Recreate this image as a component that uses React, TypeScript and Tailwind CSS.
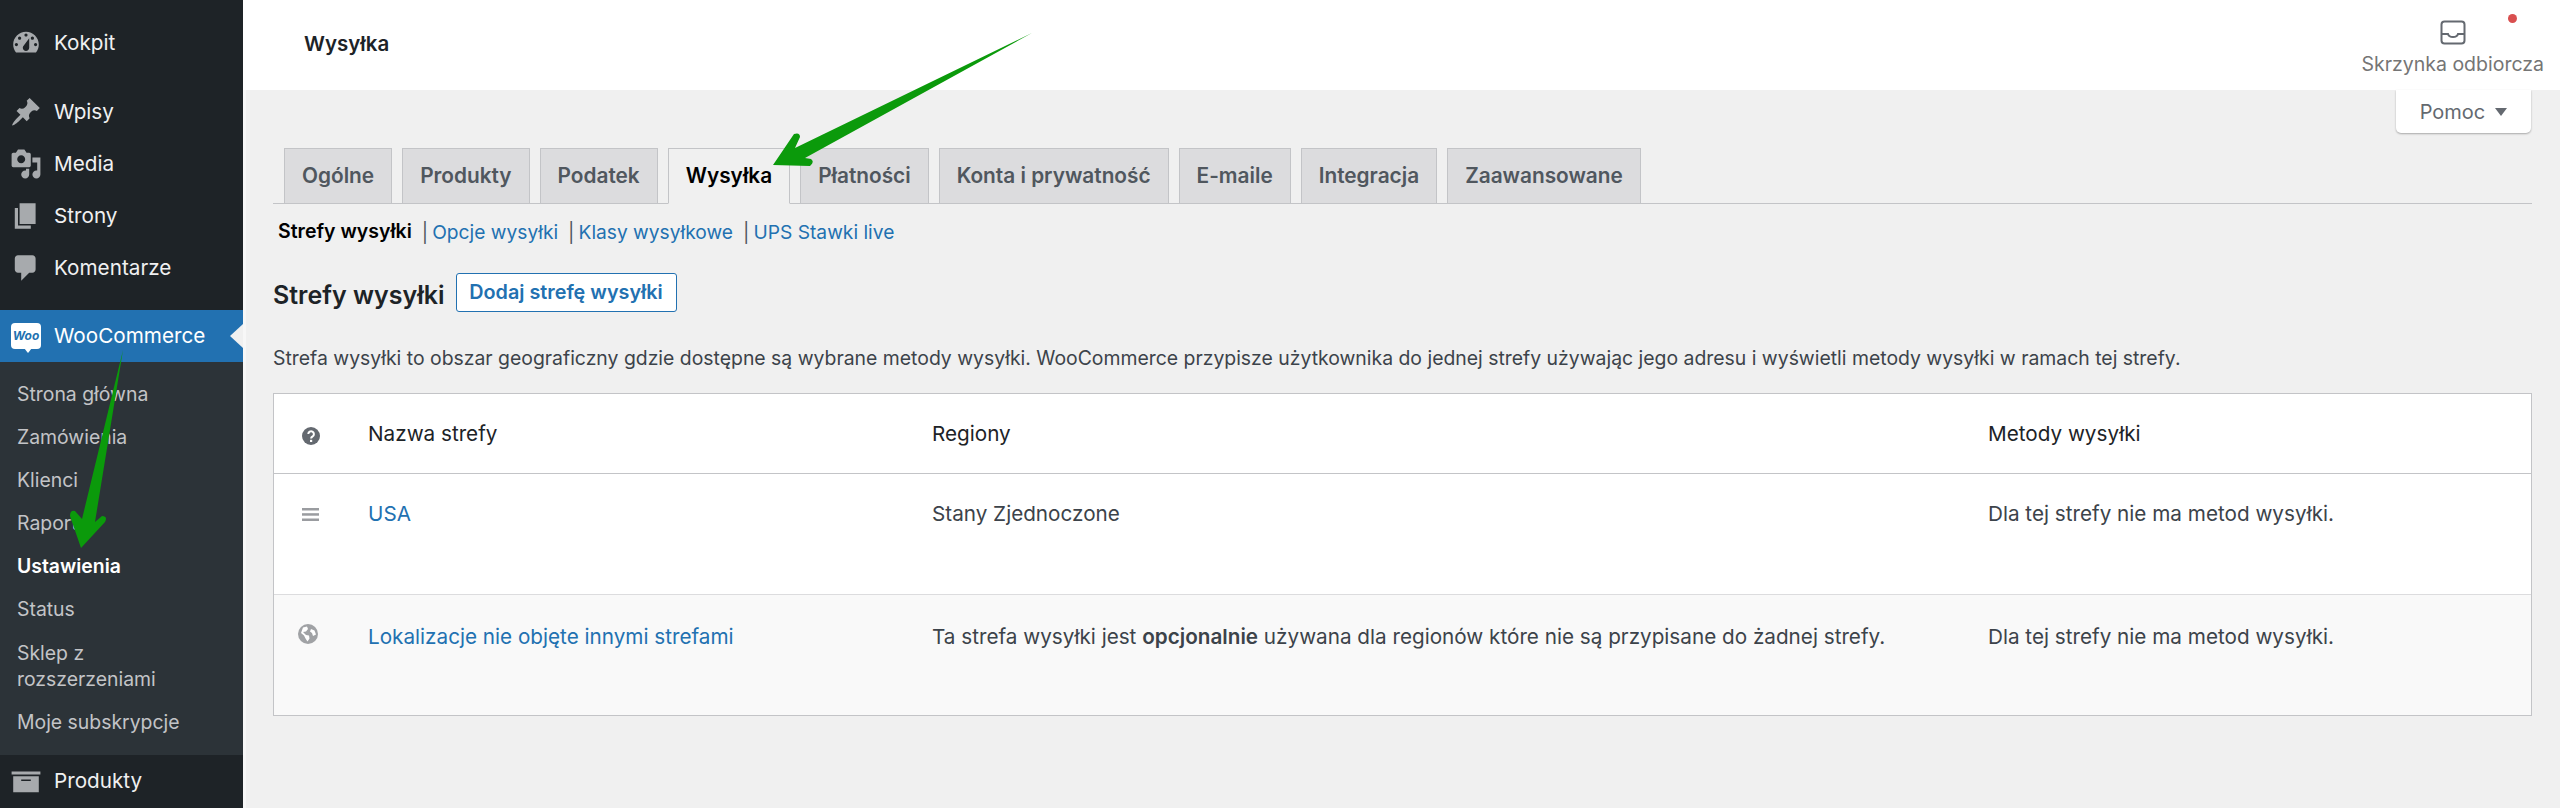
import React from 'react';

const icons: Record<string, string> = {
  dashboard:
    'M3.76 16h12.48c1.1-1.37 1.76-3.11 1.76-5 0-4.42-3.58-8-8-8s-8 3.58-8 8c0 1.89.66 3.63 1.76 5zM10 4c.55 0 1 .45 1 1s-.45 1-1 1-1-.45-1-1 .45-1 1-1zM6 6c.55 0 1 .45 1 1s-.45 1-1 1-1-.45-1-1 .45-1 1-1zm8 0c.55 0 1 .45 1 1s-.45 1-1 1-1-.45-1-1 .45-1 1-1zm-5.37 5.55L12 7v6c0 1.1-.9 2-2 2s-2-.9-2-2c0-.57.24-1.08.63-1.45zM4 10c.55 0 1 .45 1 1s-.45 1-1 1-1-.45-1-1 .45-1 1-1zm12 0c.55 0 1 .45 1 1s-.45 1-1 1-1-.45-1-1 .45-1 1-1z',
  post: 'M10.44 3.02l1.82-1.82 6.36 6.35-1.83 1.82c-1.05-.68-2.48-.57-3.41.36l-.75.75c-.92.93-1.04 2.35-.35 3.41l-1.83 1.82-2.41-2.41-2.8 2.79c-.42.42-3.38 2.71-3.8 2.29s1.86-3.39 2.28-3.81l2.79-2.79L4.1 9.36l1.83-1.82c1.05.69 2.48.57 3.4-.36l.75-.75c.93-.92 1.05-2.35.36-3.41z',
  media:
    'M13 11V4c0-.55-.45-1-1-1h-1.67L9 1H5L3.67 3H2c-.55 0-1 .45-1 1v7c0 .55.45 1 1 1h10c.55 0 1-.45 1-1zM7 4.5c1.38 0 2.5 1.12 2.5 2.5S8.38 9.5 7 9.5 4.5 8.38 4.5 7 5.62 4.5 7 4.5zM14 6h5v10.5c0 1.38-1.12 2.5-2.5 2.5S14 17.88 14 16.5s1.12-2.5 2.5-2.5c.17 0 .34.02.5.05V9h-3V6zm-4 8.05V13h2v3.5c0 1.38-1.12 2.5-2.5 2.5S7 17.88 7 16.5 8.12 14 9.5 14c.17 0 .34.02.5.05z',
  page: 'M6 15V2h10v13H6zm-1 1h8v2H3V5h2v11z',
  comments: 'M5 2h9c1.1 0 2 .9 2 2v7c0 1.1-.9 2-2 2h-2l-5 5v-5H5c-1.1 0-2-.9-2-2V4c0-1.1.9-2 2-2z',
  archive: 'M19 4v2H1V4h18zM2 7h16v10H2V7zm11 3V9H7v1h6z',
};

const MenuIcon = ({ name }: { name: string }) => (
  <svg viewBox="0 0 20 20" className="w-8 h-8 shrink-0 fill-[#a7aaad]">
    <path fillRule="evenodd" d={icons[name]} />
  </svg>
);

const MenuItem = ({ icon, label }: { icon: string; label: string }) => (
  <div className="h-[52px] flex items-center pl-[10px] gap-3 text-[#f0f0f1]">
    <MenuIcon name={icon} />
    <span>{label}</span>
  </div>
);

const submenu = ['Strona główna', 'Zamówienia', 'Klienci', 'Raporty'];

const Sidebar = () => (
  <nav className="w-[243px] shrink-0 bg-[#1e2327] text-[20.7px] pt-[17px] flex flex-col">
    <MenuItem icon="dashboard" label="Kokpit" />
    <div className="h-[17px]" />
    <MenuItem icon="post" label="Wpisy" />
    <MenuItem icon="media" label="Media" />
    <MenuItem icon="page" label="Strony" />
    <MenuItem icon="comments" label="Komentarze" />
    <div className="h-4" />
    <div className="relative h-[52px] bg-[#2271b1] flex items-center pl-[11px] gap-[13px] text-white">
      <div className="relative w-[30px] h-[26px] bg-white rounded-[4px] flex items-center justify-center shrink-0">
        <span className="text-[12px] font-bold italic text-[#2271b1] leading-none">Woo</span>
        <div className="absolute left-[13px] top-[25px] w-0 h-0 border-x-[4px] border-x-transparent border-t-[5px] border-t-white" />
      </div>
      <span>WooCommerce</span>
      <div className="absolute right-0 top-[14px] w-0 h-0 border-y-[12px] border-y-transparent border-r-[13px] border-r-[#f0f0f0]" />
    </div>
    <div className="bg-[#2c3338] pt-[11px] pb-[11px] text-[19.400px] text-[#c3c4c7] pl-[17px]">
      {submenu.map((s) => (
        <div key={s} className="h-[43px] flex items-center">{s}</div>
      ))}
      <div className="h-[43px] flex items-center font-semibold text-white">Ustawienia</div>
      <div className="h-[43px] flex items-center">Status</div>
      <div className="py-[9px] leading-[26px]">Sklep z<br />rozszerzeniami</div>
      <div className="h-[43px] flex items-center">Moje subskrypcje</div>
    </div>
    <MenuItem icon="archive" label="Produkty" />
  </nav>
);

const TopBar = () => (
  <header className="h-[90px] bg-white flex justify-between pl-[61px] pr-4 shrink-0">
    <div className="flex items-center pb-[2px] text-[20.500px] font-semibold text-[#1d2327]">Wysyłka</div>
    <div className="relative flex flex-col items-center pt-5 text-[19.500px] text-[#757575]">
      <svg viewBox="0 0 26 25" className="w-[26px] h-[25px] fill-none stroke-[#646970] stroke-2">
        <rect x="1.5" y="1.5" width="23" height="22" rx="3" />
        <path d="M1.5 14h6.5c.6 2 2 3 5 3s4.400-1 5-3h6.500" />
      </svg>
      <span className="leading-[26px] mt-[6px]">Skrzynka odbiorcza</span>
      <div className="absolute left-[147px] top-[14px] w-[9px] h-[9px] rounded-full bg-[#d94f4f]" />
    </div>
  </header>
);

const tabs = ['Ogólne', 'Produkty', 'Podatek', 'Wysyłka', 'Płatności', 'Konta i prywatność', 'E-maile', 'Integracja', 'Zaawansowane'];

const Tabs = () => (
  <div className="flex gap-[10px] pl-[11px] border-b border-[#c3c4c7] h-[56px] mt-[15px] text-[20.800px] font-semibold">
    {tabs.map((t) =>
      t === 'Wysyłka' ? (
        <div key={t} className="h-[56px] px-[17px] flex items-center bg-[#f0f0f0] border border-[#c3c4c7] border-b-[#f0f0f0] text-black">{t}</div>
      ) : (
        <div key={t} className="h-[56px] px-[17px] flex items-center bg-[#dcdcde] border border-[#c3c4c7] text-[#50575e]">{t}</div>
      ),
    )}
  </div>
);

const SubNav = () => (
  <div className="flex items-center h-[26px] mt-[15px] pl-[5px] text-[19.200px] text-[#2271b1]">
    <span className="font-semibold text-black text-[19.500px]">Strefy wysyłki</span>
    <span className="text-[#50575e] ml-[10px] mr-1">|</span>
    <span>Opcje wysyłki</span>
    <span className="text-[#50575e] ml-[10px] mr-1">|</span>
    <span>Klasy wysyłkowe</span>
    <span className="text-[#50575e] ml-[10px] mr-1">|</span>
    <span>UPS Stawki live</span>
  </div>
);

const HelpIcon = () => (
  <svg viewBox="0 0 18 18" className="w-[18px] h-[18px]">
    <circle cx="9" cy="9" r="9" fill="#646970" />
    <path d="M6.300 7a2.800 2.800 0 1 1 4.300 2.400c-1 .6-1.500 1-1.500 2.200" fill="none" stroke="#fff" strokeWidth="2" />
    <rect x="8" y="12.800" width="2.200" height="2.200" fill="#fff" />
  </svg>
);

const DragIcon = () => (
  <svg viewBox="0 0 17 13" className="w-[17px] h-[13px] fill-[#9a9ca0]">
    <rect width="17" height="2.500" />
    <rect y="5.200" width="17" height="2.500" />
    <rect y="10.500" width="17" height="2.500" />
  </svg>
);

const GlobeIcon = () => (
  <svg viewBox="0 0 20 20" className="w-5 h-5">
    <circle cx="10" cy="10" r="10" fill="#a0a2a5" />
    <path d="M5 3.500l4-1 1 2.500-2 2.500-3 .5 3 3 3 .5.500 3-2 3-2-3-1.500-3-3-2.500zM13 5l3.500 1.500 1.500 4-3 1.500-1-3-2-1.500z" fill="#fff" />
  </svg>
);

const Table = () => (
  <div className="mt-[22px] border border-[#c3c4c7] bg-white text-[20.700px] text-[#3c434a]">
    <div className="grid grid-cols-[94px_564px_1056px_1fr] h-[80px] items-center border-b border-[#c3c4c7] text-[#1d2327]">
      <div className="pl-[28px] pt-1"><HelpIcon /></div>
      <div>Nazwa strefy</div>
      <div>Regiony</div>
      <div>Metody wysyłki</div>
    </div>
    <div className="grid grid-cols-[94px_564px_1056px_1fr] h-[121px] pt-[27px] leading-[26px] border-b border-[#dcdcde]">
      <div className="pl-[28px] pt-[7px]"><DragIcon /></div>
      <div className="text-[#2271b1]">USA</div>
      <div>Stany Zjednoczone</div>
      <div>Dla tej strefy nie ma metod wysyłki.</div>
    </div>
    <div className="grid grid-cols-[94px_564px_1056px_1fr] h-[120px] pt-[29px] leading-[26px] bg-[#f9f9f9]">
      <div className="pl-6"><GlobeIcon /></div>
      <div className="text-[#2271b1]">Lokalizacje nie objęte innymi strefami</div>
      <div>Ta strefa wysyłki jest <b className="font-semibold">opcjonalnie</b> używana dla regionów które nie są przypisane do żadnej strefy.</div>
      <div>Dla tej strefy nie ma metod wysyłki.</div>
    </div>
  </div>
);

export default function App() {
  return (
    <div className="relative w-[2560px] h-[808px] overflow-hidden flex bg-[#f0f0f0] font-['Inter',sans-serif]">
      <Sidebar />
      <main className="flex-1 flex flex-col">
        <TopBar />
        <div className="flex-1 border-l-[3px] border-[#f7f7f7]">
          <div className="flex justify-end pr-[29px]">
            <div className="h-[43px] w-[135px] bg-white rounded-b-[5px] shadow-[0_1px_2px_rgba(0,0,0,0.3)] flex items-center justify-center gap-[10px] text-[20px] text-[#646970]">
              Pomoc
              <svg viewBox="0 0 12 8" className="w-3 h-2 fill-[#646970]"><path d="M0 0h12L6 8z" /></svg>
            </div>
          </div>
          <div className="pl-[27px] pr-[28px]">
            <Tabs />
            <SubNav />
            <div className="flex items-center gap-[11px] mt-[28px]">
              <h2 className="mt-1 leading-[30px] text-[25px] font-semibold text-[#1d2327]">Strefy wysyłki</h2>
              <div className="h-[39px] w-[221px] flex items-center justify-center bg-white border border-[#2271b1] rounded-[3px] text-[19.800px] font-semibold text-[#2271b1]">Dodaj strefę wysyłki</div>
            </div>
            <p className="mt-[33px] leading-[26px] text-[19.400px] text-[#3c434a]">
              Strefa wysyłki to obszar geograficzny gdzie dostępne są wybrane metody wysyłki. WooCommerce przypisze użytkownika do jednej strefy używając jego adresu i wyświetli metody wysyłki w ramach tej strefy.
            </p>
            <Table />
          </div>
        </div>
      </main>
      {/* green annotation arrows */}
      <svg className="absolute inset-0 w-full h-full pointer-events-none" viewBox="0 0 2560 808">
        <path fill="#0b9a0b" d="M1032 33L795 148L800 137Q800 132 794 134L773 165L810 166Q815 162 811 159L805 158Z" />
        <path fill="#0b9a0b" d="M123 350L82 519L75 511Q70 510 70 516L81 548L105 522Q108 516 102 516L95 522Z" />
      </svg>
    </div>
  );
}
